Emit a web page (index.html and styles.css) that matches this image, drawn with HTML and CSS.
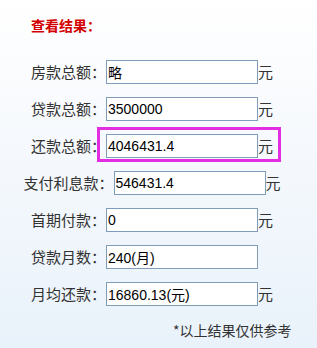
FILE: index.html
```html
<!DOCTYPE html>
<html lang="zh-CN">
<head>
<meta charset="utf-8">
<title>查看结果</title>
<link rel="stylesheet" href="styles.css">
</head>
<body>
<div class="panel">
  <div class="title">查看结果：</div>
  <div class="rows">
    <div class="row"><span class="label">房款总额：</span><input class="field" type="text" value="略"><span class="unit">元</span></div>
    <div class="row"><span class="label">贷款总额：</span><input class="field" type="text" value="3500000"><span class="unit">元</span></div>
    <div class="row marked"><span class="label">还款总额：</span><input class="field" type="text" value="4046431.4"><span class="unit">元</span><span class="mark"></span></div>
    <div class="row"><span class="label">支付利息款：</span><input class="field" type="text" value="546431.4"><span class="unit">元</span></div>
    <div class="row"><span class="label">首期付款：</span><input class="field" type="text" value="0"><span class="unit">元</span></div>
    <div class="row"><span class="label">贷款月数：</span><input class="field" type="text" value="240(月)"><span class="unit blank">元</span></div>
    <div class="row"><span class="label">月均还款：</span><input class="field" type="text" value="16860.13(元)"><span class="unit">元</span></div>
  </div>
  <div class="note">*以上结果仅供参考</div>
</div>
</body>
</html>
```

FILE: styles.css
```css
html, body {
  margin: 0;
  padding: 0;
}
body {
  width: 317px;
  height: 348px;
  background: linear-gradient(#ffffff 0%, #f6f9fd 40%, #e9f2fa 100%);
  font-family: "Noto Sans CJK SC", "DejaVu Sans", sans-serif;
  color: #333;
  overflow: hidden;
}
.panel {
  width: 304px;
}
.title {
  padding: 15px 0 0 31px;
  font-size: 14px;
  line-height: 20px;
  font-weight: bold;
  color: #d40000;
}
.rows {
  margin-top: 25px;
  display: flex;
  flex-direction: column;
  gap: 13px;
}
.row {
  position: relative;
  display: flex;
  justify-content: center;
  align-items: center;
  height: 24px;
}
.label {
  font-size: 15px;
  line-height: 24px;
  white-space: nowrap;
}
.field {
  box-sizing: border-box;
  width: 152px;
  height: 24px;
  margin: 0;
  padding: 0 1px;
  border: 1px solid #7f9db9;
  background: #fff;
  color: #000;
  font-family: "Liberation Sans", "Noto Sans CJK SC", sans-serif;
  font-size: 14px;
  outline: none;
}
.unit {
  font-size: 15px;
  line-height: 24px;
  width: 15px;
}
.unit.blank {
  visibility: hidden;
}
.marked .mark {
  position: absolute;
  left: 97px;
  top: -7px;
  width: 184px;
  height: 35px;
  box-sizing: border-box;
  border: 3px solid #e22ee0;
}
.note {
  margin-top: 14px;
  padding-left: 173px;
  font-size: 14px;
  line-height: 20px;
  color: #333;
  white-space: nowrap;
}
```
